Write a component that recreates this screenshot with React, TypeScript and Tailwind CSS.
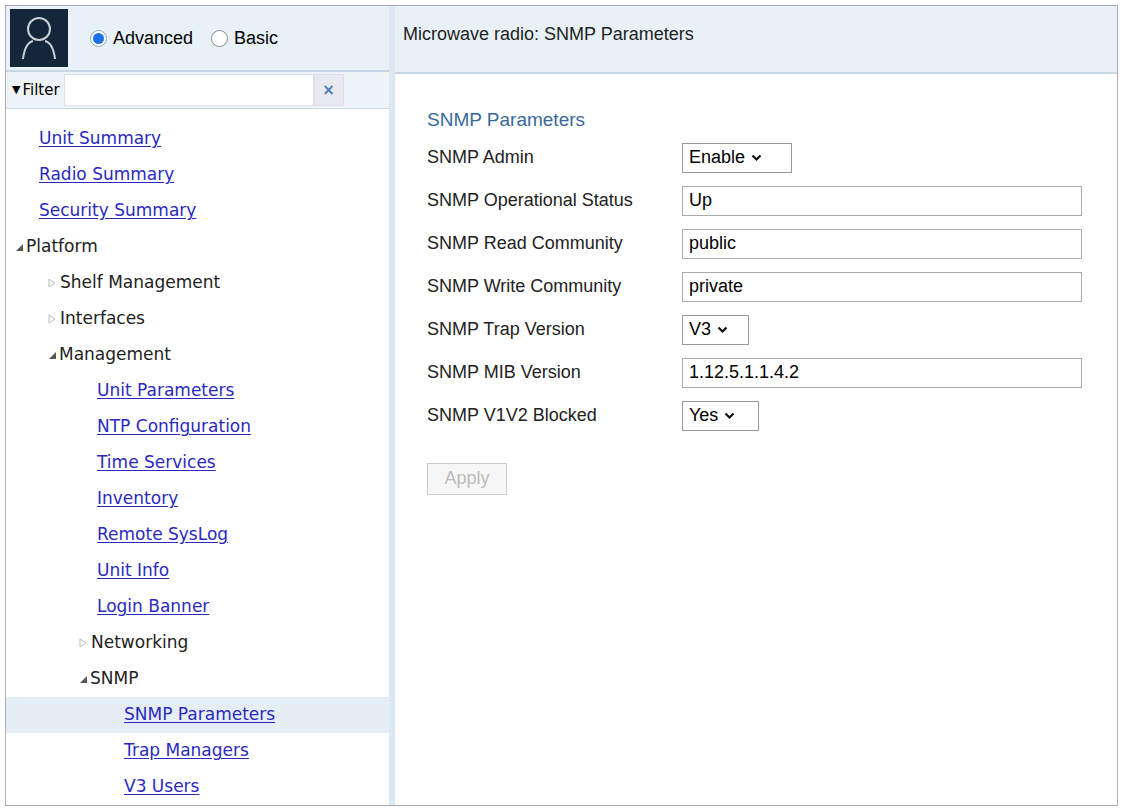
import React from "react";

const Tri = ({ open }: { open: boolean }) =>
  open ? (
    <svg width="9" height="9" viewBox="0 0 9 9" className="mr-[2px]"><polygon points="8,1 8,8 1,8" fill="#555" /></svg>
  ) : (
    <svg width="9" height="10" viewBox="0 0 9 10" className="mr-[3px]"><polygon points="1,1 7,5 1,9" fill="none" stroke="#bbb" /></svg>
  );

const Link = ({ t, pl, hl }: { t: string; pl: number; hl?: boolean }) => (
  <div className={`h-[36px] flex items-center ${hl ? "bg-[#e6eef5]" : ""}`} style={{ paddingLeft: pl }}>
    <span className="text-[#2a2ac0] underline underline-offset-2">{t}</span>
  </div>
);
const Node = ({ t, pl, open }: { t: string; pl: number; open: boolean }) => (
  <div className="h-[36px] flex items-center text-[#222]" style={{ paddingLeft: pl }}>
    <Tri open={open} />
    <span>{t}</span>
  </div>
);

const Sel = ({ v, w }: { v: string; w: number }) => (
  <div className="h-[30px] border border-[#999] bg-white flex items-center px-[6px] gap-[6px]" style={{ width: w }}>
    <span>{v}</span>
    <svg width="11" height="8" viewBox="0 0 11 8"><polyline points="1.5,1.5 5.5,5.5 9.5,1.5" fill="none" stroke="#111" strokeWidth="2.2" /></svg>
  </div>
);
const Inp = ({ v }: { v: string }) => (
  <div className="h-[30px] w-[400px] border border-[#aaa] bg-white flex items-center px-[6px]">{v}</div>
);

export default function App() {
  const rows: [string, React.ReactNode][] = [
    ["SNMP Admin", <Sel v="Enable" w={110} />],
    ["SNMP Operational Status", <Inp v="Up" />],
    ["SNMP Read Community", <Inp v="public" />],
    ["SNMP Write Community", <Inp v="private" />],
    ["SNMP Trap Version", <Sel v="V3" w={67} />],
    ["SNMP MIB Version", <Inp v="1.12.5.1.1.4.2" />],
    ["SNMP V1V2 Blocked", <Sel v="Yes" w={77} />],
  ];
  return (
    <div className="w-[1123px] h-[810px] bg-white p-[5px] pb-[4px] text-[17px]" style={{ fontFamily: "'DejaVu Sans', sans-serif" }}>
      <div className="w-full h-full border border-[#aab] flex overflow-hidden">
        <div className="w-[389px] shrink-0 border-r-[6px] border-[#dde8f2] flex flex-col">
          <div className="h-[68px] bg-[#e9f1f8] border-b-2 border-[#c6d6e6] flex items-center pl-[4px]">
            <div className="w-[58px] h-[58px] bg-[#14263a] flex items-center justify-center">
              <svg width="40" height="46" viewBox="0 0 40 46"><circle cx="20" cy="14" r="11" fill="none" stroke="#c8d0d8" strokeWidth="2" /><path d="M4 44 Q6 28 14 26 M36 44 Q34 28 26 26" fill="none" stroke="#c8d0d8" strokeWidth="2" /></svg>
            </div>
            <div className="flex items-center ml-[22px] gap-[6px] text-[18px]" style={{ fontFamily: "'Liberation Sans', sans-serif" }}>
              <span className="w-[17px] h-[17px] rounded-full border border-[#8ab] bg-white flex items-center justify-center"><span className="w-[11px] h-[11px] rounded-full bg-[#1a73e8]" /></span>
              <span>Advanced</span>
              <span className="ml-[12px] w-[17px] h-[17px] rounded-full border border-[#888] bg-white" />
              <span>Basic</span>
            </div>
          </div>
          <div className="h-[38px] bg-[#eef3f8] border-b border-[#cfdbe6] flex items-center pl-[6px] text-[15px]">
            <span className="text-[11px] mr-[2px]">▼</span><span>Filter</span>
            <div className="ml-[4px] w-[250px] h-[32px] bg-white border border-[#dde]" />
            <div className="w-[30px] h-[32px] bg-[#e8eaf0] border border-[#dde] flex items-center justify-center text-[#4a7ab8] font-bold">×</div>
          </div>
          <div className="flex-1 pt-[12px]" style={{ fontFamily: "'DejaVu Sans', sans-serif" }}>
            <Link t="Unit Summary" pl={33} />
            <Link t="Radio Summary" pl={33} />
            <Link t="Security Summary" pl={33} />
            <Node t="Platform" pl={9} open />
            <Node t="Shelf Management" pl={42} open={false} />
            <Node t="Interfaces" pl={42} open={false} />
            <Node t="Management" pl={42} open />
            <Link t="Unit Parameters" pl={91} />
            <Link t="NTP Configuration" pl={91} />
            <Link t="Time Services" pl={91} />
            <Link t="Inventory" pl={91} />
            <Link t="Remote SysLog" pl={91} />
            <Link t="Unit Info" pl={91} />
            <Link t="Login Banner" pl={91} />
            <Node t="Networking" pl={73} open={false} />
            <Node t="SNMP" pl={73} open />
            <Link t="SNMP Parameters" pl={118} hl />
            <Link t="Trap Managers" pl={118} />
            <Link t="V3 Users" pl={118} />
          </div>
        </div>
        <div className="flex-1 flex flex-col" style={{ fontFamily: "'Liberation Sans', sans-serif" }}>
          <div className="h-[68px] bg-[#e9f1f8] border-b-2 border-[#c6d6e6] flex items-center pl-[8px] pb-[10px] text-[18px] text-[#222]">Microwave radio: SNMP Parameters</div>
          <div className="pl-[32px] pt-[32px] text-[18px]">
            <div className="text-[#3a6a9a] text-[19px] mb-[8px]">SNMP Parameters</div>
            <div className="flex flex-col gap-[13px]">
              {rows.map(([l, c]) => (
                <div key={l} className="flex items-center h-[30px]">
                  <span className="w-[255px] shrink-0 text-[#222]">{l}</span>
                  {c}
                </div>
              ))}
            </div>
            <div className="mt-[32px] w-[80px] h-[32px] border border-[#ccc] bg-[#f6f6f6] text-[#bbb] flex items-center justify-center">Apply</div>
          </div>
        </div>
      </div>
    </div>
  );
}
